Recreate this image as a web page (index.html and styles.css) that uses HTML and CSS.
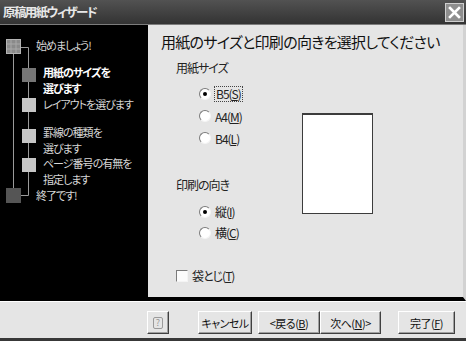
FILE: index.html
```html
<!DOCTYPE html>
<html lang="ja">
<head>
    <meta charset="UTF-8">
    <title>原稿用紙ウィザード</title>
    <link rel="stylesheet" href="styles.css">
</head>
<body>
<div class="window">

    <div class="titlebar">
        <span class="title">原稿用紙ウィザード</span>
        <span class="close">
            <svg width="13" height="13" viewBox="0 0 13 13"><path d="M2 2 L11 11 M11 2 L2 11" stroke="#fff" stroke-width="2.6" stroke-linecap="square"/></svg>
        </span>
    </div>

    <div class="body">
        <div class="steps">
            <svg class="tree" width="40" height="190" viewBox="0 0 40 190">
                <path d="M13.5 29 V163" stroke="#9a9a9a" fill="none"/>
                <path d="M21 22.5 H28.5 V170.5 H21" stroke="#9a9a9a" fill="none"/>
                <rect x="6.5" y="14.5" width="14" height="14" fill="#8a8a8a" stroke="#b4b4b4"/>
                <path d="M11 15 V28 M16 15 V28 M7 19 H20 M7 24 H20" stroke="#a8a8a8"/>
                <rect x="22" y="43" width="14" height="14" fill="#767676"/>
                <rect x="22" y="73" width="14" height="14" fill="#c6c6c6"/>
                <rect x="22" y="104" width="14" height="14" fill="#c6c6c6"/>
                <rect x="22" y="133" width="14" height="14" fill="#c6c6c6"/>
                <rect x="6" y="163" width="15" height="15" fill="#555"/>
            </svg>
            <ul class="step-list">
                <li class="edge s1">始めましょう!</li>
                <li class="current s2">用紙のサイズを<br>選びます</li>
                <li class="s3">レイアウトを選びます</li>
                <li class="s4">罫線の種類を<br>選びます</li>
                <li class="s5">ページ番号の有無を<br>指定します</li>
                <li class="edge s6">終了です!</li>
            </ul>
        </div>

        <div class="main">
            <h1>用紙のサイズと印刷の向きを選択してください</h1>
            <div class="options">
                <div class="choices">
                    <p class="group-label">用紙サイズ</p>
                    <div class="radios size">
                        <div class="radio-row"><span class="radio checked"></span><span class="focus">B5(<u>S</u>)</span></div>
                        <div class="radio-row"><span class="radio"></span><span>A4(<u>M</u>)</span></div>
                        <div class="radio-row"><span class="radio"></span><span>B4(<u>L</u>)</span></div>
                    </div>
                    <p class="group-label orient-label">印刷の向き</p>
                    <div class="radios orient">
                        <div class="radio-row"><span class="radio checked"></span><span>縦(<u>I</u>)</span></div>
                        <div class="radio-row"><span class="radio"></span><span>横(<u>C</u>)</span></div>
                    </div>
                    <div class="check-row"><span class="checkbox"></span><span>袋とじ(<u>T</u>)</span></div>
                </div>
                <div class="preview"></div>
            </div>
        </div>
    </div>

    <div class="footer">
        <button class="btn help" disabled><span class="help-icon">?</span></button>
        <button class="btn cancel">キャンセル</button>
        <button class="btn back">&lt;戻る(<u>B</u>)</button>
        <button class="btn next">次へ(<u>N</u>)&gt;</button>
        <button class="btn finish">完了(<u>F</u>)</button>
    </div>

</div>
</body>
</html>
```

FILE: styles.css
```css
* {
    box-sizing: border-box;
    margin: 0;
    padding: 0;
}
body {
    font-family: "Noto Sans CJK JP", sans-serif;
    font-feature-settings: "palt";
    background: #e5e5e5;
}
.window {
    width: 466px;
    height: 341px;
    display: flex;
    flex-direction: column;
    overflow: hidden;
}
.titlebar {
    height: 25px;
    flex-shrink: 0;
    background: linear-gradient(#525252, #333);
    border-bottom: 1px solid #7c7c7c;
    display: flex;
    align-items: center;
    justify-content: space-between;
    padding: 0 2px 0 3px;
}
.title {
    color: #e8e8e8;
    font-size: 12.5px;
    font-weight: bold;
    line-height: 16px;
    letter-spacing: -1.6px;
}
.close {
    width: 19px;
    height: 19px;
    background: #8e8e8e;
    border: 1px solid #cfcfcf;
    display: flex;
    align-items: center;
    justify-content: center;
}
.body {
    display: flex;
    height: 276px;
    flex-shrink: 0;
}
.steps {
    width: 148px;
    background: #000;
    position: relative;
    flex-shrink: 0;
}
.tree {
    position: absolute;
    left: 0;
    top: 0;
}
.step-list {
    list-style: none;
    font-size: 11px;
    line-height: 16px;
    letter-spacing: -1px;
    white-space: nowrap;
    color: #d6d6d6;
    padding-left: 43px;
}
.step-list .edge {
    margin-left: -7px;
}
.step-list .current {
    color: #fff;
    font-weight: bold;
}
.s1 { margin-top: 12px; }
.s2 { margin-top: 11px; }
.s3 { margin-top: 0; }
.s4 { margin-top: 12px; }
.s5 { margin-top: -1px; }
.s6 { margin-top: 0; }

.main {
    flex: 1;
    background: #e5e5e5;
    border-bottom: 4px solid #000;
    border-right: 3px solid #d2d2d2;
    padding: 7px 0 0 13px;
}
h1 {
    font-size: 15px;
    font-weight: normal;
    line-height: 20px;
    letter-spacing: -0.7px;
    white-space: nowrap;
    color: #111;
}
.options {
    display: flex;
    padding-left: 15px;
    margin-top: 9px;
    font-size: 12px;
    letter-spacing: -1px;
    white-space: nowrap;
    color: #222;
}
.choices {
    width: 126px;
}
.group-label {
    line-height: 14px;
}
.radios {
    padding-left: 23px;
    margin-top: 8px;
}
.radio-row {
    height: 22px;
    display: flex;
    align-items: center;
    gap: 4px;
}
.orient .radio-row {
    height: 21px;
}
.radio {
    width: 12px;
    height: 12px;
    border-radius: 50%;
    background: #fff;
    border: 1px solid;
    border-color: #7a7a7a #f4f4f4 #f4f4f4 #7a7a7a;
    display: flex;
    align-items: center;
    justify-content: center;
}
.radio.checked::after {
    content: "";
    width: 4px;
    height: 4px;
    border-radius: 50%;
    background: #000;
}
.focus {
    outline: 1px dotted #444;
    padding: 0 1px;
    line-height: 14px;
}
.orient-label {
    margin-top: 29px;
}
.orient {
    margin-top: 9px;
}
.check-row {
    margin-top: 26px;
    display: flex;
    align-items: center;
    gap: 4px;
    line-height: 14px;
}
.checkbox {
    width: 12px;
    height: 12px;
    background: #fbfbfb;
    border: 1px solid;
    border-color: #7a7a7a #f4f4f4 #f4f4f4 #7a7a7a;
}
.preview {
    width: 71px;
    height: 101px;
    margin-top: 52px;
    background: #fff;
    border: 1px solid #3c3c3c;
    border-top-width: 2px;
}

.footer {
    flex: 1;
    border-top: 1px solid #fff;
    border-bottom: 3px solid #383838;
    display: flex;
    align-items: flex-start;
    padding: 9px 0 0 147px;
}
.btn {
    height: 23px;
    font-family: "Noto Sans CJK JP", sans-serif;
    font-feature-settings: "palt";
    font-size: 11px;
    letter-spacing: -0.5px;
    color: #111;
    background: #e5e5e5;
    border: 1px solid;
    border-color: #fff #404040 #404040 #fff;
    box-shadow: inset -1px -1px 0 #a0a0a0;
}
.help {
    width: 22px;
    display: flex;
    align-items: center;
    justify-content: center;
}
.help-icon {
    width: 10px;
    height: 12px;
    border: 1px solid #9a9a9a;
    border-radius: 2px;
    font-size: 9px;
    line-height: 10px;
    color: #9a9a9a;
    letter-spacing: 0;
}
.cancel { width: 54px; margin-left: 29px; }
.back { width: 62px; margin-left: 6px; }
.next { width: 61px; }
.finish { width: 57px; margin-left: 17px; }
```
